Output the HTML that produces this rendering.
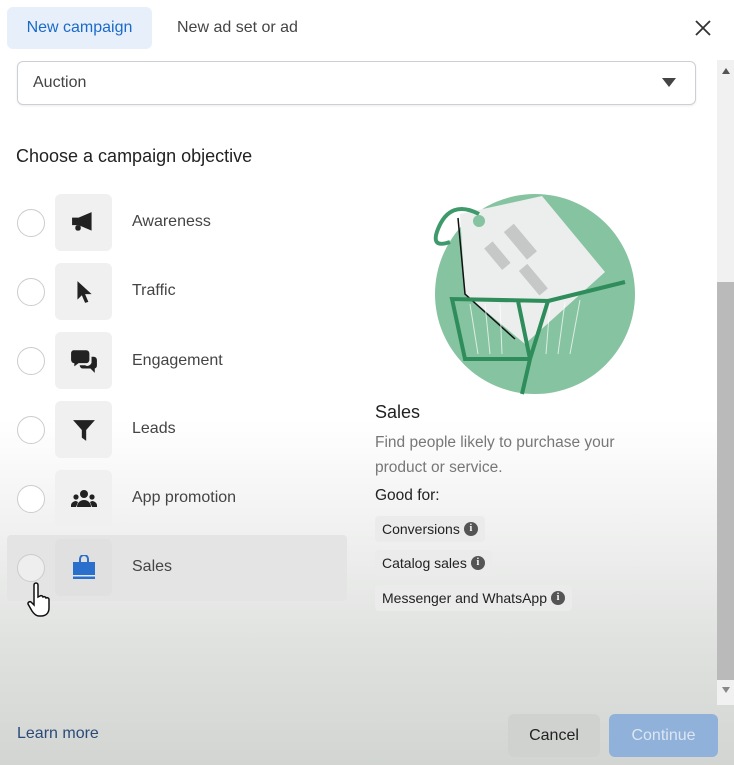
<!DOCTYPE html>
<html><head><meta charset="utf-8"><style>
*{margin:0;padding:0;box-sizing:border-box}
body{width:734px;height:765px;overflow:hidden;font-family:"Liberation Sans",sans-serif;position:relative;
background:linear-gradient(to bottom,#fff 0px,#fff 420px,#f1f2f1 520px,#dfe1df 650px,#d2d5d2 765px);color:#1c1e21}
.a{position:absolute}
.tab1{left:7px;top:7px;width:145px;height:42px;background:#e7f0fa;border-radius:6px;color:#1b6ac9;font-size:16px;line-height:42px;text-align:center}
.tab2{left:177px;top:7px;height:42px;line-height:42px;font-size:16px;color:#444}
.sel{left:17px;top:61px;width:679px;height:44px;border:1px solid #ccd0d5;border-radius:6px;background:#fff;font-size:16px;line-height:42px;padding-left:15px;color:#444;box-shadow:0 1px 2px rgba(0,0,0,.08)}
.h{left:16px;top:146px;font-size:18px;color:#222}
.radio{width:28px;height:28px;border:1.5px solid #ccc;border-radius:50%;left:17px;background:#fff}
.ib{left:55px;width:57px;height:57px;background:#f0f0f0;border-radius:6px;display:flex;align-items:center;justify-content:center}
.lbl{left:132px;font-size:16px;color:#444}
.chip{left:375px;height:26px;background:#ebebeb;border-radius:4px;font-size:14px;line-height:26px;padding:0 7px;color:#222;display:flex;align-items:center;gap:4px}
.i{width:14px;height:14px;border-radius:50%;background:#555;color:#fff;font-size:10px;font-weight:bold;line-height:14px;text-align:center;font-family:"Liberation Serif",serif}
</style></head><body>
<div class="a tab1">New campaign</div>
<div class="a tab2">New ad set or ad</div>
<svg class="a" style="left:694px;top:19px" width="18" height="18" viewBox="0 0 18 18"><path d="M2 2L16 16M16 2L2 16" stroke="#333" stroke-width="1.8"/></svg>
<div class="a sel">Auction</div>
<svg class="a" style="left:662px;top:78px" width="14" height="9"><path d="M0 0H14L7 9Z" fill="#444"/></svg>
<div class="a" style="left:717px;top:60px;width:17px;height:645px;background:#f1f1f1"></div>
<div class="a" style="left:717px;top:282px;width:17px;height:398px;background:#b9bab9"></div>
<svg class="a" style="left:722px;top:68px" width="8" height="6"><path d="M0 6H8L4 0Z" fill="#555"/></svg>
<svg class="a" style="left:722px;top:687px" width="8" height="6"><path d="M0 0H8L4 6Z" fill="#888"/></svg>
<div class="a h">Choose a campaign objective</div>

<div class="a" style="left:7px;top:535px;width:340px;height:66px;background:#e3e4e3;border-radius:4px"></div>

<div class="a radio" style="top:209px"></div><div class="a ib" style="top:194px"><svg width="26" height="24" viewBox="0 0 24 22"><path d="M1 6h6l12-5v17L7 13H1z" fill="#222"/><rect x="4" y="13" width="5" height="5" rx="2" fill="#222"/></svg></div><div class="a lbl" style="top:213px">Awareness</div>
<div class="a radio" style="top:278px"></div><div class="a ib" style="top:263px"><svg width="18" height="24" viewBox="0 0 16 22"><path d="M2 1L15 13H9l3 7-3 1-3-7-4 4z" fill="#222"/></svg></div><div class="a lbl" style="top:282px">Traffic</div>
<div class="a radio" style="top:347px"></div><div class="a ib" style="top:332px"><svg width="28" height="26" viewBox="0 0 26 24"><path d="M3 2h12a3 3 0 013 3v6a3 3 0 01-3 3H8l-4 3v-3a3 3 0 01-3-3V5a3 3 0 012-3z" fill="#222"/><path d="M20 8h2a3 3 0 013 3v5a3 3 0 01-2 3v4l-4-4h-7a3 3 0 01-3-3h5a4 4 0 006-4z" fill="#222"/></svg></div><div class="a lbl" style="top:352px">Engagement</div>
<div class="a radio" style="top:416px"></div><div class="a ib" style="top:401px"><svg width="24" height="24" viewBox="0 0 22 22"><path d="M1 2h20l-8 9v10l-4-3v-7z" fill="#222"/></svg></div><div class="a lbl" style="top:420px">Leads</div>
<div class="a radio" style="top:485px"></div><div class="a ib" style="top:470px"><svg width="26" height="20" viewBox="0 0 26 20"><circle cx="13" cy="5" r="4" fill="#222"/><circle cx="5" cy="8" r="2.6" fill="#222"/><circle cx="21" cy="8" r="2.6" fill="#222"/><path d="M6 18a7 7 0 0114 0z" fill="#222"/><path d="M0 18a5 5 0 015-6l2 1-2 5zM26 18a5 5 0 00-5-6l-2 1 2 5z" fill="#222"/></svg></div><div class="a lbl" style="top:489px">App promotion</div>
<div class="a radio" style="top:554px;background:#eee"></div><div class="a ib" style="top:539px;background:#e0e0e0"><svg width="24" height="26" viewBox="0 0 24 26"><path d="M8 7V4a4 4 0 018 0v3" stroke="#2a6fcc" stroke-width="2" fill="none"/><rect x="1" y="7" width="22" height="17" fill="#2a6fcc"/><rect x="1" y="20" width="22" height="1.5" fill="#dfe8f5"/></svg></div><div class="a lbl" style="top:558px">Sales</div>
<svg class="a" style="left:27px;top:582px" width="26" height="36" viewBox="0 0 26 36"><path d="M7 3a2 2 0 014 0v12l2-1a2 2 0 013 1 2 2 0 013 1 2 2 0 013 2v8c0 5-3 8-8 8h-2c-3 0-5-2-7-5l-4-7a2 2 0 013-2l3 3z" fill="#fff" stroke="#111" stroke-width="1.5"/></svg>

<svg class="a" style="left:430px;top:194px" width="206" height="202" viewBox="0 0 206 202">
<circle cx="105" cy="100" r="100" fill="#86c3a1"/>
<path d="M30 20 L112 2 L175 78 L95 150 L35 100 Z" fill="#eceeed"/>
<path d="M28 24 L35 100 L85 145" stroke="#111" stroke-width="1.5" fill="none"/>
<g fill="#c6c8c7"><rect x="62" y="48" width="11" height="28" transform="rotate(-40 67 62)"/><rect x="84" y="30" width="13" height="36" transform="rotate(-40 90 48)"/><rect x="98" y="70" width="11" height="32" transform="rotate(-40 103 86)"/></g>
<path d="M49 20 Q20 5 8 35 Q0 55 20 48" stroke="#3e9a6a" stroke-width="4" fill="none"/>
<circle cx="49" cy="27" r="6" fill="#86c3a1"/>
<path d="M22 105 L35 165 L100 165 L118 107 Z M88 107 L100 165 M100 165 L92 200 M118 107 L195 88" stroke="#2f8d5c" stroke-width="4" fill="none"/>
<g stroke="#fff" stroke-width="1" opacity=".7"><path d="M40 110 L48 160M55 110 L60 160M70 110 L72 160M120 110 L116 160M135 108 L128 160M150 106 L140 160"/></g>
</svg>
<div class="a" style="left:375px;top:402px;font-size:18px;color:#222">Sales</div>
<div class="a" style="left:375px;top:430px;font-size:15.5px;line-height:25px;color:#777;width:275px">Find people likely to purchase your product or service.</div>
<div class="a" style="left:375px;top:487px;font-size:15.5px;color:#222">Good for:</div>
<div class="a chip" style="top:516px">Conversions <span class="i">i</span></div>
<div class="a chip" style="top:550px">Catalog sales <span class="i">i</span></div>
<div class="a chip" style="top:585px">Messenger and WhatsApp <span class="i">i</span></div>

<div class="a" style="left:17px;top:725px;font-size:16px;color:#2b4a7a">Learn more</div>
<div class="a" style="left:508px;top:714px;width:92px;height:43px;background:#d0d2d0;border-radius:6px;font-size:16px;line-height:43px;text-align:center;color:#222">Cancel</div>
<div class="a" style="left:609px;top:714px;width:109px;height:43px;background:#8fb1da;border-radius:6px;font-size:16px;line-height:43px;text-align:center;color:#dce6f2">Continue</div>
</body></html>
